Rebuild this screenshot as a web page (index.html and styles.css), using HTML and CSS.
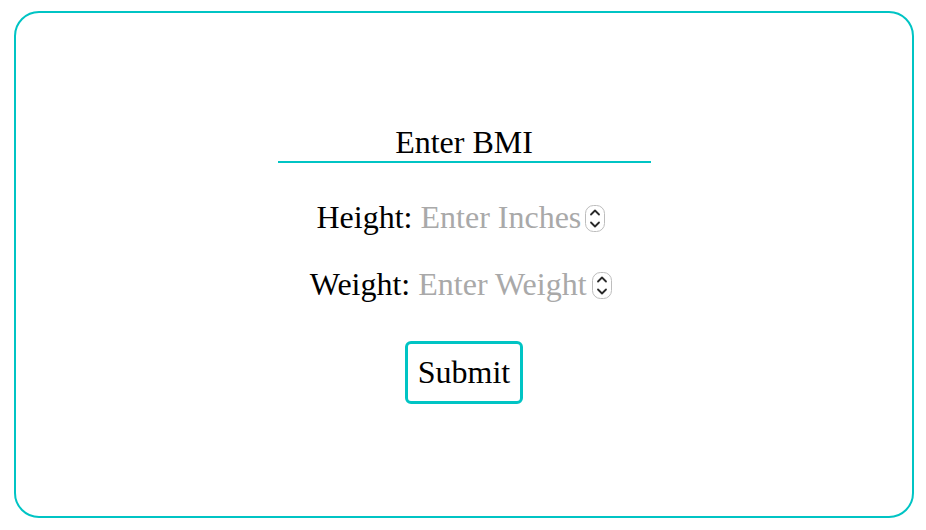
FILE: index.html
```html
<!DOCTYPE html>
<html lang="en">
<head>
<meta charset="utf-8">
<title>Enter BMI</title>
<link rel="stylesheet" href="styles.css">
</head>
<body>
<form class="card">
  <div class="title">Enter BMI</div>
  <div class="row row-height">
    <label class="label" for="h">Height:</label>
    <span class="field">
      <input id="h" class="num num-height" type="number" placeholder="Enter Inches">
      <svg class="spin" width="20" height="27" viewBox="0 0 20 27"><rect x="0.5" y="0.5" width="19" height="26" rx="8" fill="#fff" stroke="#bdbdbd"/><path d="M6 9.5 L10 5.5 L14 9.5" fill="none" stroke="#2a2a2a" stroke-width="1.8" stroke-linecap="round" stroke-linejoin="round"/><path d="M6 17.5 L10 21.5 L14 17.5" fill="none" stroke="#2a2a2a" stroke-width="1.8" stroke-linecap="round" stroke-linejoin="round"/></svg>
    </span>
  </div>
  <div class="row row-weight">
    <label class="label" for="w">Weight:</label>
    <span class="field">
      <input id="w" class="num num-weight" type="number" placeholder="Enter Weight">
      <svg class="spin" width="20" height="27" viewBox="0 0 20 27"><rect x="0.5" y="0.5" width="19" height="26" rx="8" fill="#fff" stroke="#bdbdbd"/><path d="M6 9.5 L10 5.5 L14 9.5" fill="none" stroke="#2a2a2a" stroke-width="1.8" stroke-linecap="round" stroke-linejoin="round"/><path d="M6 17.5 L10 21.5 L14 17.5" fill="none" stroke="#2a2a2a" stroke-width="1.8" stroke-linecap="round" stroke-linejoin="round"/></svg>
    </span>
  </div>
  <div class="actions">
    <button class="submit" type="button">Submit</button>
  </div>
</form>
</body>
</html>
```
FILE: styles.css
```css
html, body {
  margin: 0;
  padding: 0;
  background: #fff;
}
body {
  font-family: "Liberation Serif", "Times New Roman", serif;
  font-size: 32px;
  color: #000;
}
.card {
  box-sizing: border-box;
  width: 900px;
  height: 507px;
  margin: 11px 0 0 14px;
  border: 2px solid #00c4c4;
  border-radius: 25px;
  padding-top: 111px;
  display: flex;
  flex-direction: column;
  align-items: center;
}
.title {
  width: 373px;
  text-align: center;
  line-height: normal;
  border-bottom: 2px solid #00c4c4;
}
.row {
  display: flex;
  align-items: center;
  justify-content: center;
  line-height: normal;
  padding-right: 6px;
}
.row-height {
  margin-top: 36px;
}
.row-weight {
  margin-top: 30px;
}
.label {
  margin-right: 8px;
}
.field {
  display: inline-flex;
  align-items: center;
}
.num {
  font-family: inherit;
  font-size: 32px;
  line-height: normal;
  height: 37px;
  border: none;
  padding: 0;
  margin: 0;
  outline: none;
  background: transparent;
  color: #000;
  -moz-appearance: textfield;
}
.num::-webkit-outer-spin-button,
.num::-webkit-inner-spin-button {
  -webkit-appearance: none;
  margin: 0;
}
.num::placeholder {
  color: #a9a9a9;
  opacity: 1;
}
.num-height {
  width: 165px;
}
.num-weight {
  width: 174px;
}
.spin {
  display: block;
  flex: none;
  width: 20px;
  height: 27px;
  margin-top: 1px;
}
.actions {
  margin-top: 38px;
}
.submit {
  font-family: inherit;
  font-size: 32px;
  line-height: normal;
  color: #000;
  background: #fff;
  border: 3px solid #00c4c4;
  border-radius: 6px;
  padding: 10px 10px;
  margin: 0;
}
```
